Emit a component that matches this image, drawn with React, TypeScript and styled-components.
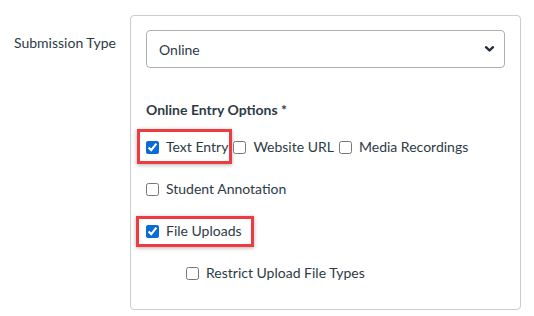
import React from "react";
import styled, { createGlobalStyle, css } from "styled-components";

const GlobalStyle = createGlobalStyle`
  html, body {
    margin: 0;
    padding: 0;
    background: #ffffff;
  }
  body {
    font-family: Lato, "Noto Sans", "Liberation Sans", sans-serif;
    color: #2d3b45;
  }
`;

const Page = styled.div`
  display: flex;
  align-items: flex-start;
  padding-top: 15px;
  width: 534px;
  height: 316px;
  box-sizing: border-box;
`;

const FieldLabel = styled.div`
  width: 130px;
  box-sizing: border-box;
  padding: 18px 0 0 14px;
  font-size: 14px;
  line-height: 20px;
  color: #2d3b45;
`;

const Panel = styled.div`
  width: 391px;
  height: 295px;
  box-sizing: border-box;
  border: 1px solid #c7cdd1;
  border-radius: 4px;
  padding: 14px 15px;
  display: flex;
  flex-direction: column;
`;

const SelectBox = styled.div`
  height: 38px;
  box-sizing: border-box;
  border: 1px solid #a9b1b7;
  border-radius: 4px;
  display: flex;
  align-items: center;
  justify-content: space-between;
  padding: 0 9px 0 12px;
  font-size: 14px;
  color: #2d3b45;
`;

const Heading = styled.div`
  margin-top: 32px;
  font-size: 14px;
  font-weight: 700;
  line-height: 20px;
  color: #2d3b45;
`;

const OptionRow = styled.div<{ $indent?: number; $top: number }>`
  display: flex;
  align-items: center;
  gap: 5px;
  margin-top: ${(p) => p.$top}px;
  padding-left: ${(p) => p.$indent ?? 0}px;
  height: 20px;
`;

type Inset = { t: number; r: number; b: number; l: number };

const Item = styled.label<{ $mark?: Inset }>`
  position: relative;
  display: inline-flex;
  align-items: center;
  gap: 7px;
  font-size: 14px;
  line-height: 20px;
  color: #2d3b45;
  white-space: nowrap;
  ${(p) =>
    p.$mark &&
    css`
      &::after {
        content: "";
        position: absolute;
        top: ${-p.$mark.t}px;
        right: ${-p.$mark.r}px;
        bottom: ${-p.$mark.b}px;
        left: ${-p.$mark.l}px;
        border: 3px solid #ed3b3f;
        box-shadow: 0 1px 4px rgba(0, 0, 0, 0.3);
        pointer-events: none;
      }
    `}
`;

const Box = styled.input`
  width: 13px;
  height: 13px;
  margin: 0;
  accent-color: #0b6bd6;
`;

type Opt = { label: string; checked?: boolean; mark?: Inset };

const Option = ({ label, checked, mark }: Opt) => (
  <Item $mark={mark}>
    <Box type="checkbox" defaultChecked={checked} />
    {label}
  </Item>
);

const Chevron = () => (
  <svg width="11" height="8" viewBox="0 0 11 8" aria-hidden="true">
    <path
      d="M2 2.2 L5.5 5.5 L9 2.2"
      fill="none"
      stroke="#1f2d3d"
      strokeWidth="2.4"
      strokeLinecap="round"
      strokeLinejoin="round"
    />
  </svg>
);

export default function App() {
  return (
    <>
      <GlobalStyle />
      <Page>
        <FieldLabel>Submission Type</FieldLabel>
        <Panel>
          <SelectBox>
            <span>Online</span>
            <Chevron />
          </SelectBox>
          <Heading>Online Entry Options *</Heading>
          <OptionRow $top={17}>
            <Option label="Text Entry" checked mark={{ t: 8, r: 4, b: 7, l: 9 }} />
            <Option label="Website URL" />
            <Option label="Media Recordings" />
          </OptionRow>
          <OptionRow $top={22}>
            <Option label="Student Annotation" />
          </OptionRow>
          <OptionRow $top={22}>
            <Option label="File Uploads" checked mark={{ t: 5, r: 12, b: 6, l: 10 }} />
          </OptionRow>
          <OptionRow $top={22} $indent={40}>
            <Option label="Restrict Upload File Types" />
          </OptionRow>
        </Panel>
      </Page>
    </>
  );
}
